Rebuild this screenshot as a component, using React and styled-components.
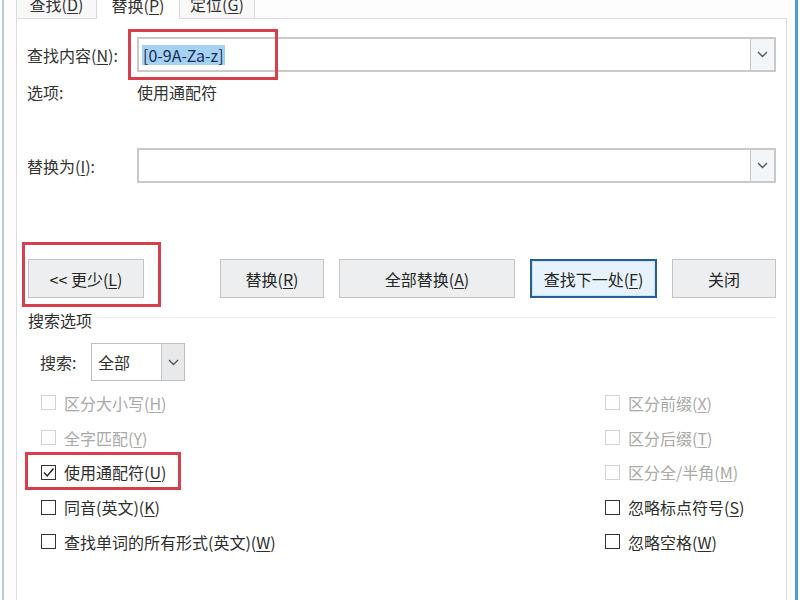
import React from "react";
import styled, { createGlobalStyle } from "styled-components";

const Global = createGlobalStyle`
  html, body { margin: 0; padding: 0; background: #fff; }
  * { box-sizing: border-box; }
`;

const Root = styled.div`
  width: 800px;
  height: 600px;
  overflow: hidden;
  background: #fff;
  display: flex;
  font-family: "Noto Sans CJK SC", "Noto Sans", sans-serif;
  font-size: 16px;
  line-height: 20px;
  color: #2e2e2e;
`;

const Window = styled.div`
  flex: 1;
  margin: 0 2px;
  border-left: 2px solid #b7cad8;
  border-right: 3px solid #4f9ad8;
  padding: 0 8px 0 12px;
  display: flex;
  flex-direction: column;
  background: #fdfdfd;
`;

const TabStrip = styled.div`
  display: flex;
  margin-top: -11px;
  height: 29px;
  flex-shrink: 0;
`;

const Tab = styled.div`
  width: ${(p) => p.$w}px;
  height: ${(p) => (p.$active ? 30 : 29)}px;
  margin-bottom: ${(p) => (p.$active ? -1 : 0)}px;
  position: relative;
  z-index: ${(p) => (p.$active ? 1 : 0)};
  display: flex;
  align-items: center;
  justify-content: center;
  border: 1px solid #dadada;
  border-bottom: none;
  border-left-width: ${(p) => (p.$first ? 1 : 0)}px;
  background: ${(p) => (p.$active ? "#ffffff" : "#f8f8f8")};
  color: #333;
`;

const Panel = styled.div`
  flex: 1;
  border: 1px solid #dcdcdc;
  border-bottom: none;
  background: #fff;
  padding: 0 10px;
  display: flex;
  flex-direction: column;
`;

const FieldRow = styled.div`
  display: grid;
  grid-template-columns: 110px 1fr;
  align-items: center;
  height: ${(p) => p.$h || 35}px;
  margin-top: ${(p) => p.$mt}px;
`;

const Label = styled.span`
  color: #333;
  white-space: nowrap;
`;

const Combo = styled.div`
  position: relative;
  height: 35px;
  border: 2px solid #c9c9c9;
  display: flex;
  background: #fff;
`;

const ComboText = styled.div`
  flex: 1;
  display: flex;
  align-items: center;
  padding-left: 3px;
`;

const Selected = styled.span`
  background: #a4d2f5;
  color: #1b2b4d;
  padding: 0 1px;
`;

const DropButton = styled.div`
  width: ${(p) => p.$w || 24}px;
  display: flex;
  align-items: center;
  justify-content: center;
  border-left: 1px solid #c6c6c6;
  background: ${(p) => p.$bg || "#f3f6f8"};
`;

const Highlight = styled.div`
  position: absolute;
  left: ${(p) => p.$l}px;
  top: ${(p) => p.$t}px;
  width: ${(p) => p.$w}px;
  height: ${(p) => p.$h}px;
  border: 3px solid #d63f4c;
  pointer-events: none;
`;

const ButtonRow = styled.div`
  display: flex;
  align-items: center;
  height: 39px;
  margin-top: 76px;
  padding-left: 1px;
`;

const ButtonGroup = styled.div`
  display: flex;
  gap: 15px;
  margin-left: auto;
`;

const Button = styled.div`
  position: relative;
  width: ${(p) => p.$w}px;
  height: 39px;
  display: flex;
  align-items: center;
  justify-content: center;
  border: ${(p) => (p.$default ? "2px solid #2a5e8e" : "1px solid #c4c4c4")};
  background: ${(p) => (p.$default ? "#e6f3fc" : "#eceeef")};
  box-shadow: ${(p) => (p.$default ? "inset 0 0 0 1px #c2e4f8" : "none")};
  color: #262626;
`;

const GroupHeader = styled.div`
  display: flex;
  align-items: center;
  height: 20px;
  margin-top: 12px;
  padding-left: 1px;
`;

const GroupLine = styled.div`
  flex: 1;
  height: 1px;
  background: #efefef;
  margin: 0 0 6px 2px;
`;

const SearchRow = styled.div`
  display: flex;
  align-items: center;
  margin-top: 13px;
  padding-left: 13px;
`;

const SearchLabel = styled.span`
  width: 51px;
  color: #333;
`;

const Select = styled.div`
  width: 94px;
  height: 38px;
  border: 1px solid #bdbdbd;
  display: flex;
  background: #fff;
`;

const SelectText = styled.div`
  flex: 1;
  display: flex;
  align-items: center;
  padding-left: 6px;
`;

const CheckGrid = styled.div`
  display: grid;
  grid-template-columns: 578px 1fr;
  margin-top: 4.5px;
`;

const CheckColumn = styled.div`
  display: flex;
  flex-direction: column;
  padding-left: ${(p) => p.$pl || 0}px;
`;

const CheckRow = styled.div`
  position: relative;
  height: 34.75px;
  display: flex;
  align-items: center;
  gap: 8px;
  color: ${(p) => (p.$disabled ? "#a9a9a9" : "#2e2e2e")};
  white-space: nowrap;
`;

const Box = styled.span`
  width: 15px;
  height: 15px;
  flex-shrink: 0;
  border: 1px solid ${(p) => (p.$disabled ? "#d3d3d3" : "#333")};
  background: #fff;
  display: flex;
  align-items: center;
  justify-content: center;
`;

const U = styled.u`
  text-underline-offset: 2px;
`;

const Chevron = () => (
  <svg width="11" height="7" viewBox="0 0 11 7">
    <polyline points="1,1 5.5,5.5 10,1" fill="none" stroke="#555" strokeWidth="1.4" />
  </svg>
);

const Tick = () => (
  <svg width="13" height="13" viewBox="0 0 13 13">
    <polyline points="2,6.5 5.2,10 11.5,2.5" fill="none" stroke="#222" strokeWidth="1.4" />
  </svg>
);

const Check = ({ label, mn, disabled, checked, highlight }) => (
  <CheckRow $disabled={disabled}>
    <Box $disabled={disabled}>{checked && <Tick />}</Box>
    <span>
      {label}({mn ? <U>{mn}</U> : null})
    </span>
    {highlight && <Highlight $l={-16} $t={-3} $w={156} $h={38} />}
  </CheckRow>
);

export default function App() {
  return (
    <Root>
      <Global />
      <Window>
        <TabStrip>
          <Tab $w={81} $first>查找(<U>D</U>)</Tab>
          <Tab $w={83} $active>替换(<U>P</U>)</Tab>
          <Tab $w={75}>定位(<U>G</U>)</Tab>
        </TabStrip>
        <Panel>
          <FieldRow $mt={18}>
            <Label>查找内容(<U>N</U>):</Label>
            <Combo>
              <ComboText>
                <Selected>[0-9A-Za-z]</Selected>
              </ComboText>
              <DropButton><Chevron /></DropButton>
              <Highlight $l={-11} $t={-10} $w={150} $h={51} />
            </Combo>
          </FieldRow>
          <FieldRow $mt={10} $h={20}>
            <Label>选项:</Label>
            <Label>使用通配符</Label>
          </FieldRow>
          <FieldRow $mt={46}>
            <Label>替换为(<U>I</U>):</Label>
            <Combo>
              <ComboText />
              <DropButton><Chevron /></DropButton>
            </Combo>
          </FieldRow>
          <ButtonRow>
            <Button $w={116}>
              &lt;&lt; 更少(<U>L</U>)
              <Highlight $l={-7} $t={-18} $w={139} $h={65} />
            </Button>
            <ButtonGroup>
              <Button $w={104}>替换(<U>R</U>)</Button>
              <Button $w={176}>全部替换(<U>A</U>)</Button>
              <Button $w={127} $default>查找下一处(<U>F</U>)</Button>
              <Button $w={104}>关闭</Button>
            </ButtonGroup>
          </ButtonRow>
          <GroupHeader>
            搜索选项
            <GroupLine />
          </GroupHeader>
          <SearchRow>
            <SearchLabel>搜索:</SearchLabel>
            <Select>
              <SelectText>全部</SelectText>
              <DropButton $w={23} $bg="#e8e9ea"><Chevron /></DropButton>
            </Select>
          </SearchRow>
          <CheckGrid>
            <CheckColumn $pl={14}>
              <Check label="区分大小写" mn="H" disabled />
              <Check label="全字匹配" mn="Y" disabled />
              <Check label="使用通配符" mn="U" checked highlight />
              <Check label="同音(英文)" mn="K" />
              <Check label="查找单词的所有形式(英文)" mn="W" />
            </CheckColumn>
            <CheckColumn>
              <Check label="区分前缀" mn="X" disabled />
              <Check label="区分后缀" mn="T" disabled />
              <Check label="区分全/半角" mn="M" disabled />
              <Check label="忽略标点符号" mn="S" />
              <Check label="忽略空格" mn="W" />
            </CheckColumn>
          </CheckGrid>
        </Panel>
      </Window>
    </Root>
  );
}
